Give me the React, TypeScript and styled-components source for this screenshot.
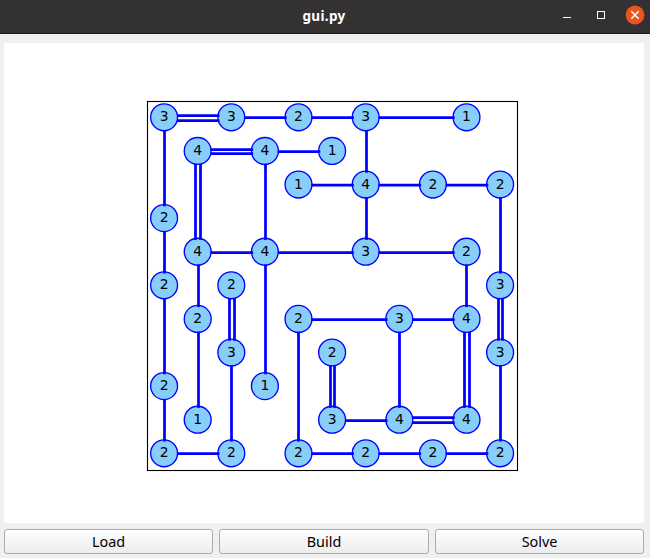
import React from "react";
import styled, { createGlobalStyle } from "styled-components";

const GlobalStyle = createGlobalStyle`
  * { box-sizing: border-box; }
  body { margin: 0; background: #efefef; }
`;

const Window = styled.div`
  width: 650px;
  height: 558px;
  display: flex;
  flex-direction: column;
  background: #efefef;
  overflow: hidden;
`;

const TitleBar = styled.header`
  height: 34px;
  flex: none;
  display: grid;
  grid-template-columns: 1fr auto 1fr;
  align-items: center;
  background: #333132;
  border-bottom: 1px solid #1d1719;
`;

const Title = styled.h1`
  grid-column: 2;
  margin: 0;
  padding: 0 2px 1px 0;
  font: 700 13.5px/20px "Noto Sans", sans-serif;
  letter-spacing: 0.35px;
  color: #fff;
`;

const WindowControls = styled.div`
  justify-self: end;
  display: flex;
  margin-right: 5px;
  padding-bottom: 3px;
  gap: 14px;
`;

const ControlButton = styled.button`
  width: 20px;
  height: 20px;
  padding: 0;
  border: 0;
  background: transparent;
  display: block;

  svg { display: block; }
`;

const Canvas = styled.main`
  margin: 9px 6px 0 4px;
  height: 480px;
  flex: none;
  background: #fff;

  svg { display: block; }
`;

const ButtonBar = styled.footer`
  display: grid;
  grid-template-columns: 209px 210px 209px;
  gap: 6px;
  padding: 6px 6px 4px 4px;
`;

const PushButton = styled.button`
  height: 25px;
  padding: 0;
  border: 1px solid #acacac;
  border-radius: 3px;
  background: linear-gradient(#fdfdfd, #ededed);
  font: 14.4px/22px "Noto Sans", sans-serif;
  color: #000;
`;

const NodeLabel = styled.text`
  font: 13.9px "DejaVu Sans", sans-serif;
  text-anchor: middle;
  fill: #000;
`;

const STEP = 33.6;
const cx = (c: number) => 164.1 + c * STEP;
const cy = (r: number) => 117.3 + r * STEP;
const baseline = (r: number) => Math.round(cy(r) + 4.01);

// column, row, required number of bridges
const islands: [number, number, number][] = [
  [0, 0, 3], [2, 0, 3], [4, 0, 2], [6, 0, 3], [9, 0, 1],
  [1, 1, 4], [3, 1, 4], [5, 1, 1],
  [4, 2, 1], [6, 2, 4], [8, 2, 2], [10, 2, 2],
  [0, 3, 2],
  [1, 4, 4], [3, 4, 4], [6, 4, 3], [9, 4, 2],
  [0, 5, 2], [2, 5, 2], [10, 5, 3],
  [1, 6, 2], [4, 6, 2], [7, 6, 3], [9, 6, 4],
  [2, 7, 3], [5, 7, 2], [10, 7, 3],
  [0, 8, 2], [3, 8, 1],
  [1, 9, 1], [5, 9, 3], [7, 9, 4], [9, 9, 4],
  [0, 10, 2], [2, 10, 2], [4, 10, 2], [6, 10, 2], [8, 10, 2], [10, 10, 2],
];

// row, first column, last column, y of each stroke
const horizontal: [number, number, number, number[]][] = [
  [0, 0, 2, [115.5, 120.5]], [0, 2, 4, [117.5]], [0, 4, 6, [117.5]], [0, 6, 9, [117.5]],
  [1, 1, 3, [149.5, 153.5]], [1, 3, 5, [151.5]],
  [2, 4, 6, [185.2]], [2, 6, 8, [185.2]], [2, 8, 10, [185.2]],
  [4, 1, 3, [252.5]], [4, 3, 6, [252.5]], [4, 6, 9, [252.5]],
  [6, 4, 7, [319.5]], [6, 7, 9, [319.5]],
  [9, 5, 7, [420.5]], [9, 7, 9, [417.5, 422.5]],
  [10, 0, 2, [453.5]], [10, 4, 6, [453.5]], [10, 6, 8, [453.5]], [10, 8, 10, [453.5]],
];

// column, first row, last row, x of each stroke
const vertical: [number, number, number, number[]][] = [
  [0, 0, 3, [164.5]], [0, 3, 5, [164.5]], [0, 5, 8, [164.5]], [0, 8, 10, [164.5]],
  [1, 1, 4, [195.5, 200.5]], [1, 4, 6, [198.5]], [1, 6, 9, [198.5]],
  [2, 5, 7, [229.5, 234.5]], [2, 7, 10, [231.5]],
  [3, 1, 4, [265.5]], [3, 4, 8, [265.5]],
  [4, 6, 10, [298.5]],
  [5, 7, 9, [330.5, 334.5]],
  [6, 0, 2, [366.5]], [6, 2, 4, [366.5]],
  [7, 6, 9, [399.5]],
  [9, 4, 6, [466.5]], [9, 6, 9, [464.5, 469.5]],
  [10, 2, 5, [500.5]], [10, 5, 7, [498.5, 502.5]], [10, 7, 10, [500.5]],
];

const START = 12.8;
const END = 11.8;

function Puzzle() {
  return (
    <svg width="640" height="480" viewBox="4 43 640 480">
      <rect x="147.5" y="101.5" width="370" height="369" fill="none" stroke="#000" strokeWidth="1.1" />
      <g fill="#87cefa" stroke="#0000ff" strokeWidth="1.35">
        {islands.map(([c, r]) => (
          <circle key={`${c}-${r}`} cx={cx(c)} cy={cy(r)} r="13.45" />
        ))}
      </g>
      <g stroke="#0000ff" strokeWidth="2.75">
        {horizontal.flatMap(([r, a, b, ys]) =>
          ys.map((y) => (
            <line key={`h${r}-${a}-${y}`} x1={cx(a) + START} x2={cx(b) - END} y1={y} y2={y} />
          ))
        )}
        {vertical.flatMap(([c, a, b, xs]) =>
          xs.map((x) => (
            <line key={`v${c}-${a}-${x}`} x1={x} x2={x} y1={cy(a) + START} y2={cy(b) - END} />
          ))
        )}
      </g>
      {islands.map(([c, r, n]) => (
        <NodeLabel key={`${c}-${r}`} x={cx(c)} y={baseline(r)}>{n}</NodeLabel>
      ))}
    </svg>
  );
}

export default function App() {
  return (
    <Window>
      <GlobalStyle />
      <TitleBar>
        <Title>gui.py</Title>
        <WindowControls>
          <ControlButton aria-label="Minimize">
            <svg width="20" height="20"><path d="M6 12.5h8" stroke="#fff" /></svg>
          </ControlButton>
          <ControlButton aria-label="Maximize">
            <svg width="20" height="20"><rect x="6.5" y="6.5" width="7" height="7" fill="none" stroke="#fff" /></svg>
          </ControlButton>
          <ControlButton aria-label="Close">
            <svg width="20" height="20">
              <circle cx="10" cy="10" r="9.4" fill="#e95420" />
              <path d="M6.3 6.3l7.4 7.4M13.7 6.3l-7.4 7.4" stroke="#fff" strokeWidth="1.5" />
            </svg>
          </ControlButton>
        </WindowControls>
      </TitleBar>
      <Canvas><Puzzle /></Canvas>
      <ButtonBar>
        <PushButton>Load</PushButton>
        <PushButton>Build</PushButton>
        <PushButton>Solve</PushButton>
      </ButtonBar>
    </Window>
  );
}
